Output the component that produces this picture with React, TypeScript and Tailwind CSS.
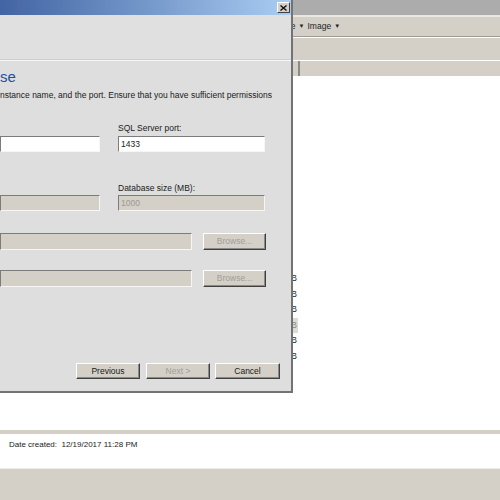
import { ReactNode } from "react";

const sunken =
  "border border-t-[#7c7c7c] border-l-[#7c7c7c] border-b-[#f6f6f6] border-r-[#f6f6f6]";
const raised =
  "border border-t-[#ffffff] border-l-[#ffffff] border-b-[#404040] border-r-[#404040] shadow-[inset_-1px_-1px_0_#8a8a8a] bg-[#d4d0c8]";

const Field = ({ value, disabled, className }: { value?: string; disabled?: boolean; className: string }) => (
  <div
    className={`${sunken} ${className} ${disabled ? "bg-[#d4d0c8] text-[#9c9a94]" : "bg-white text-[#222]"} flex items-center pl-[2px] text-[8.5px]`}
  >
    {value}
  </div>
);

const Button = ({ children, disabled, className }: { children: ReactNode; disabled?: boolean; className: string }) => (
  <div
    className={`${raised} ${className} flex items-center justify-center text-[8.5px] ${disabled ? "text-[#a09e98]" : "text-[#1a1a1a]"}`}
  >
    {children}
  </div>
);

const sizes = ["14 KB", "9 KB", "22 KB", "18 KB", "6 KB", "31 KB"];

export default function App() {
  return (
    <div className="relative w-[500px] h-[500px] overflow-hidden font-['Liberation_Sans',Arial,sans-serif]">
      {/* explorer window behind the dialog */}
      <div className="flex flex-col w-full h-full">
        <div className="h-[15px] bg-[#acacac]" />
        <div className="h-[2px] bg-[#e9e7e2]" />
        <div className="h-[19px] bg-[#d4d0c8] flex items-center pl-[279px] gap-[3px] text-[8.5px] text-[#222]">
          <span>Size</span>
          <span className="text-[6px]">▼</span>
          <span>Image</span>
          <span className="text-[6px]">▼</span>
        </div>
        <div className="h-[1px] bg-[#9c9a94]" />
        <div className="h-[1px] bg-white" />
        <div className="h-[22px] bg-[#d4d0c8]" />
        <div className="h-[1px] bg-white" />
        <div className="h-[15px] bg-[#d4d0c8] flex">
          <div className="w-[300px] border-r-2 border-[#8c8a84]" />
        </div>
        <div className="h-[354px] bg-white pt-[195px]">
          {sizes.map((s, i) => (
            <div
              key={i}
              className={`w-[298px] h-[15.5px] flex items-center justify-end pr-[1px] text-[8.5px] text-[#222] ${i === 3 ? "bg-[#dedbd4] text-[#888]" : ""}`}
            >
              {s}
            </div>
          ))}
        </div>
        <div className="h-[4px] bg-[#d4d0c8]" />
        <div className="h-[34px] bg-white pl-[9px] pt-[5px] text-[8px] text-[#222] whitespace-pre">
          Date created:  12/19/2017 11:28 PM
        </div>
        <div className="h-[1px] bg-[#eeece8]" />
        <div className="flex-1 bg-[#d4d0c8]" />
      </div>

      {/* setup wizard dialog */}
      <div className="absolute left-0 top-0 w-[293px] h-[393px] bg-[#dedede] border-r-2 border-b-2 border-[#737373] flex flex-col">
        <div className="h-[15px] shrink-0 bg-gradient-to-r from-[#4364a2] to-[#aacdf3] flex items-center justify-end pr-[1px]">
          <div className="w-[13px] h-[11px] bg-[#d4d0c8] border border-t-white border-l-white border-b-[#404040] border-r-[#404040] flex items-center justify-center">
            <svg width="7" height="6" viewBox="0 0 7 6">
              <path d="M0.5 0.5 L6.5 5.5 M6.5 0.5 L0.5 5.5" stroke="#111" strokeWidth="1.4" />
            </svg>
          </div>
        </div>
        <div className="h-[46px] shrink-0 bg-[#e0e0e0] border-b border-[#f6f6f6] shadow-[0_-1px_0_#cfcfcf_inset]" />

        <div className="flex flex-col">
          <div className="mt-[8px] h-[16px] text-[15px] leading-[16px] text-[#1d4f9e]">se</div>
          <div className="mt-[5px] leading-[11px] text-[8.5px] text-[#1a1a1a] whitespace-nowrap">
            nstance name, and the port. Ensure that you have sufficient permissions
          </div>

          <div className="mt-[22px] flex gap-[18px]">
            <div className="w-[100px] flex flex-col">
              <div className="h-[11px]" />
              <Field className="mt-[2px] h-[16px] w-[100px]" />
            </div>
            <div className="w-[147px] flex flex-col">
              <div className="h-[11px] leading-[11px] text-[8.5px] text-[#1a1a1a]">SQL Server port:</div>
              <Field value="1433" className="mt-[2px] h-[16px] w-[147px]" />
            </div>
          </div>

          <div className="mt-[31px] flex gap-[18px]">
            <div className="w-[100px] flex flex-col">
              <div className="h-[11px]" />
              <Field disabled className="mt-[1px] h-[16px] w-[100px]" />
            </div>
            <div className="w-[147px] flex flex-col">
              <div className="h-[11px] leading-[11px] text-[8.5px] text-[#1a1a1a]">Database size (MB):</div>
              <Field disabled value="1000" className="mt-[1px] h-[16px] w-[147px]" />
            </div>
          </div>

          <div className="mt-[22px] flex gap-[11px] items-center">
            <Field disabled className="h-[17px] w-[192px]" />
            <Button disabled className="h-[17px] w-[63px]">Browse...</Button>
          </div>
          <div className="mt-[20px] flex gap-[11px] items-center">
            <Field disabled className="h-[17px] w-[192px]" />
            <Button disabled className="h-[17px] w-[63px]">Browse...</Button>
          </div>

          <div className="mt-[76px] flex pl-[76px]">
            <Button className="h-[16px] w-[64px]">Previous</Button>
            <Button disabled className="ml-[6px] h-[16px] w-[64px]">Next &gt;</Button>
            <Button className="ml-[5px] h-[16px] w-[65px]">Cancel</Button>
          </div>
        </div>
      </div>
    </div>
  );
}
